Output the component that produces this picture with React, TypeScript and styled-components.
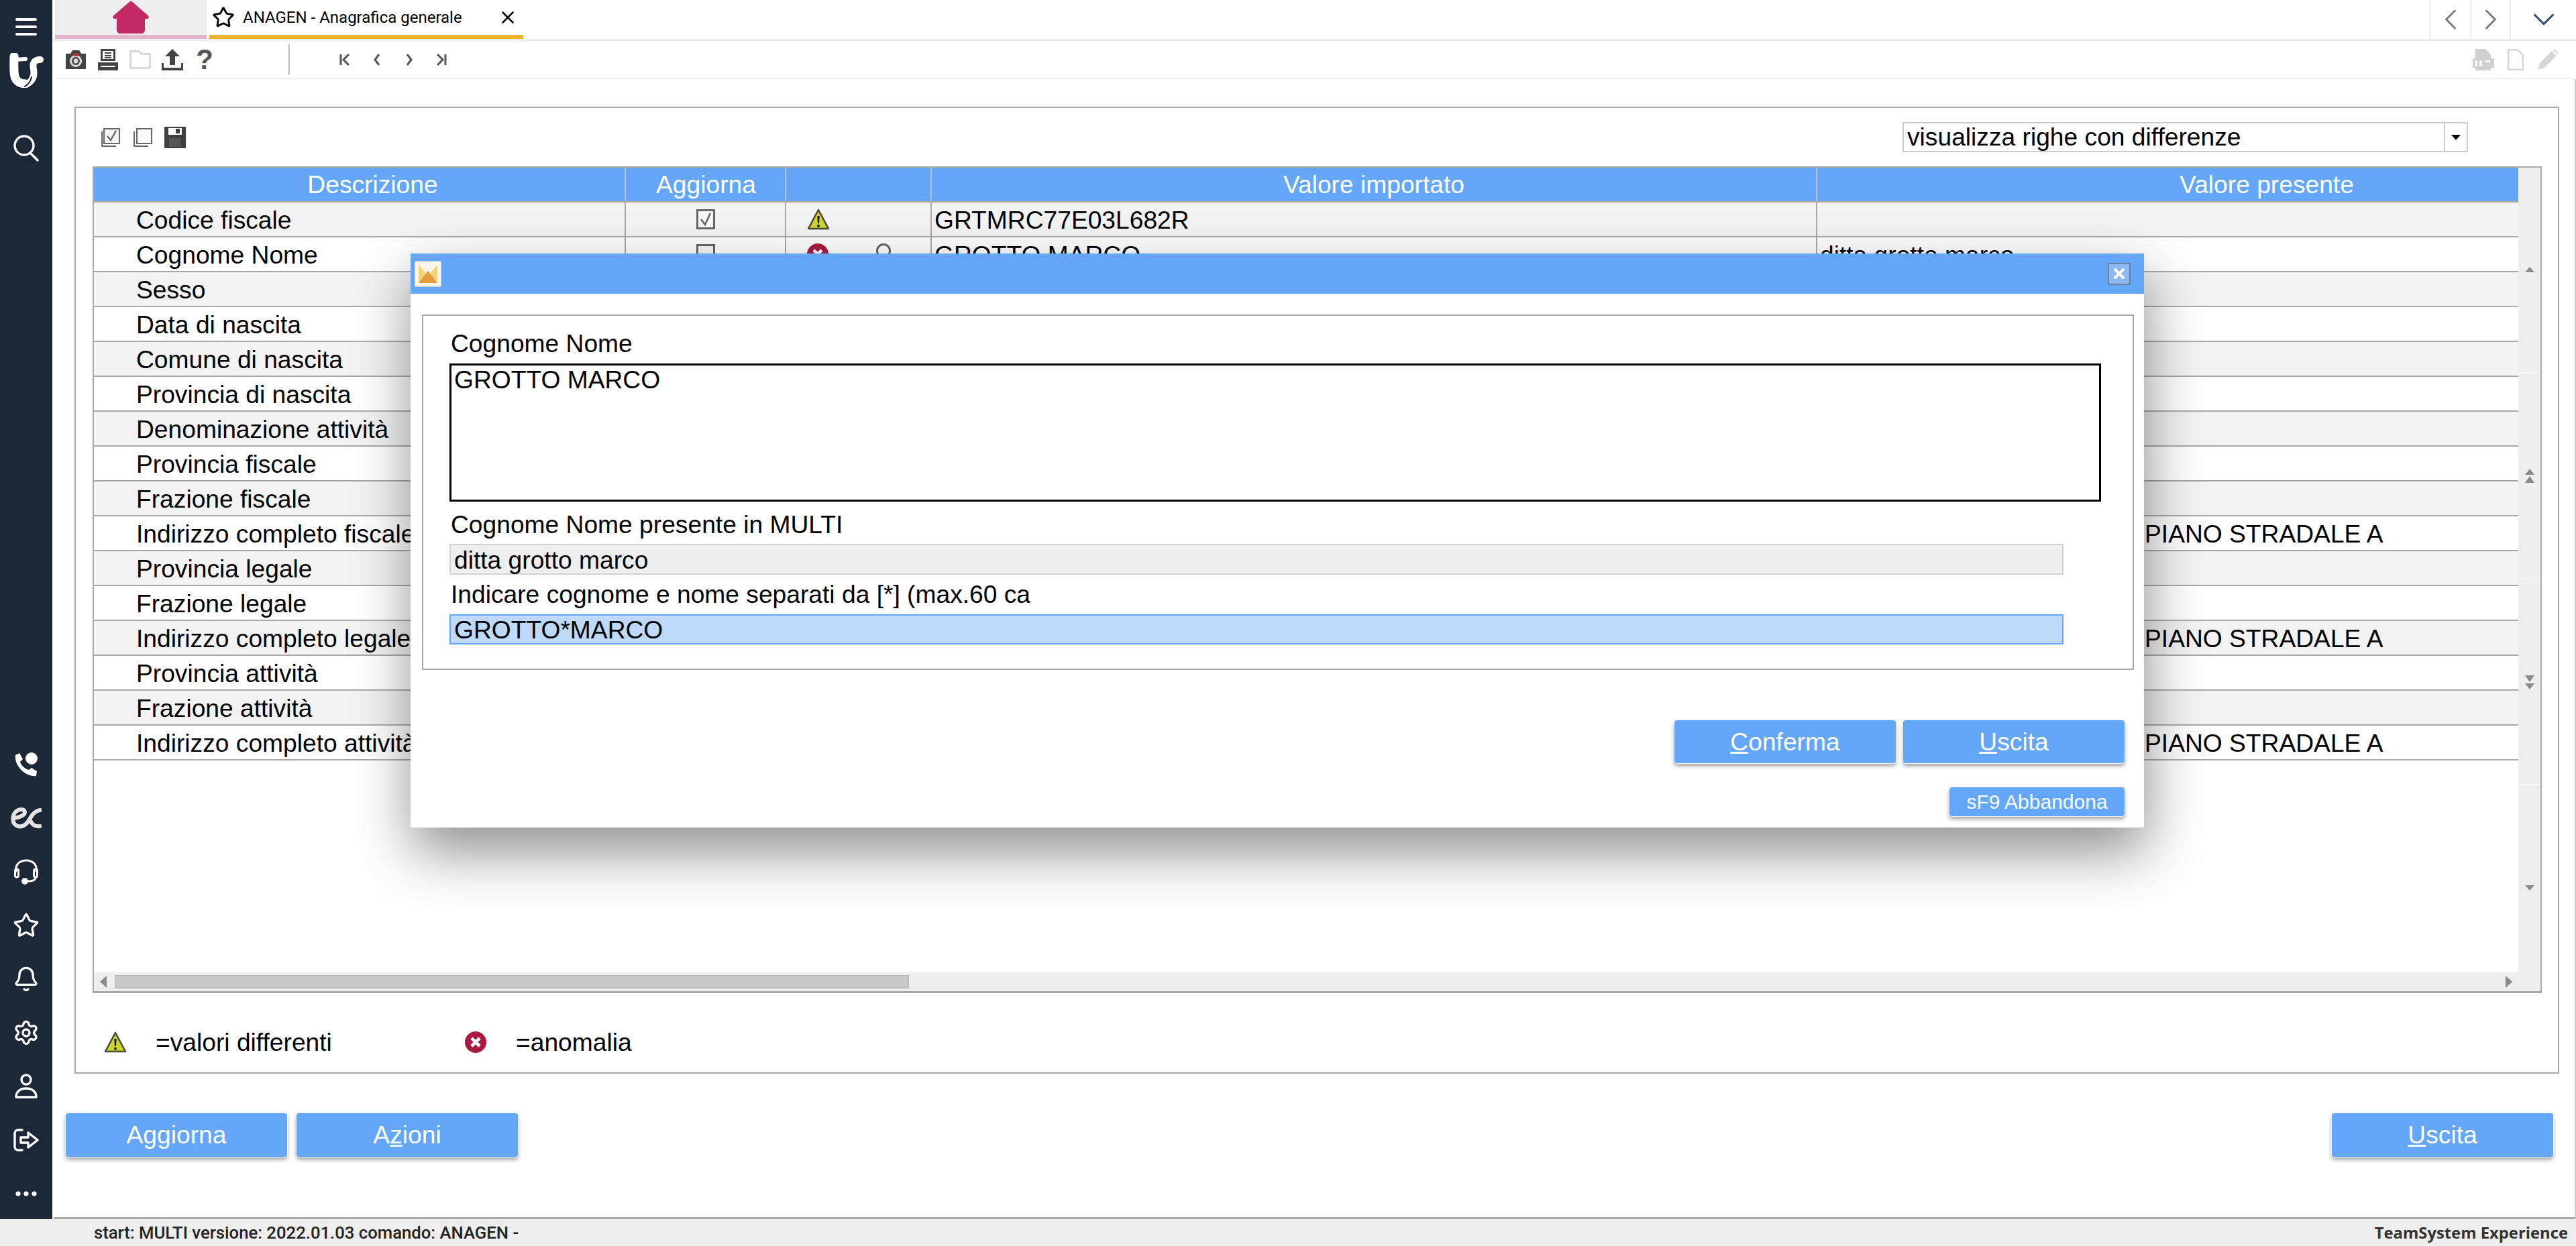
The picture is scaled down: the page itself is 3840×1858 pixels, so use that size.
import React from 'react';
import styled, { createGlobalStyle } from 'styled-components';
import { Bell, ChevronDown, ChevronLeft, ChevronRight, Settings, Star, X } from 'lucide-react';

const BLUE = '#64a6f8';
const LINE = '#a9a9a9';

const GlobalStyle = createGlobalStyle`
  html, body { margin: 0; padding: 0; background: #fff; overflow: hidden; }
  * { box-sizing: border-box; }
  body { font-family: "Liberation Sans", Arial, sans-serif; color: #000; }
`;

const Page = styled.div`
  position: relative;
  width: 3840px;
  height: 1858px;
  display: flex;
  flex-direction: column;
  overflow: hidden;
`;
const Main = styled.div`
  flex: 1;
  display: flex;
  min-height: 0;
`;

/* sidebar */
const Sidebar = styled.nav`
  width: 78px;
  background: #1c2836;
  display: flex;
  flex-direction: column;
  align-items: center;
`;
const SideSlot = styled.div<{ $h: number; $mt?: number }>`
  height: ${p => p.$h}px;
  margin-top: ${p => p.$mt || 0}px;
  display: flex;
  align-items: center;
  justify-content: center;
  color: #fff;
`;
const SideBottom = styled.div`
  margin-top: auto;
  margin-bottom: -2px;
  display: flex;
  flex-direction: column;
  align-items: center;
`;

/* right of the sidebar */
const Content = styled.div`
  flex: 1;
  min-width: 0;
  display: flex;
  flex-direction: column;
`;
const TabBar = styled.div`
  height: 61px;
  padding-left: 4px;
  border-bottom: 3px solid #eee;
  display: flex;
  gap: 4px;
`;
const HomeTab = styled.div`
  width: 226px;
  height: 58px;
  background: #eee;
  border-bottom: 6px solid #e3b4c7;
  display: flex;
  justify-content: center;
  padding-top: 2px;
`;
const AppTab = styled.div`
  width: 468px;
  height: 58px;
  border-bottom: 6px solid #efb02e;
  display: flex;
  align-items: center;
  padding-left: 4px;
  font-family: Roboto, sans-serif;
  font-size: 24px;
`;
const AppTabTitle = styled.span`
  margin-left: 12px;
  white-space: nowrap;
  width: 380px;
`;
const TabNav = styled.div`
  margin-left: auto;
  display: flex;
`;
const TabNavButton = styled.div<{ $w: number; $c: string }>`
  width: ${p => p.$w}px;
  height: 58px;
  border-left: 2px solid #eee;
  display: flex;
  align-items: center;
  justify-content: center;
  color: ${p => p.$c};
`;
const Toolbar = styled.div`
  height: 57px;
  margin: 0 4px 0 4px;
  padding: 0 14px 0 7px;
  border-bottom: 2px solid #eee;
  display: flex;
  align-items: center;
`;
const ToolSlot = styled.div`
  width: 48px;
  height: 40px;
  display: flex;
  align-items: center;
  justify-content: center;
  color: #444;
`;
const HelpMark = styled.span`
  font-size: 42px;
  font-weight: 700;
  color: #555;
  line-height: 1;
`;
const ToolDivider = styled.div`
  width: 2px;
  height: 46px;
  background: #bbb;
  margin: 0 58px 0 101px;
`;
const ToolRight = styled.div`
  margin-left: auto;
  display: flex;
`;

/* work area */
const Work = styled.div`
  flex: 1;
  display: flex;
  flex-direction: column;
  padding-top: 41px;
  border-right: 2px solid #ccc;
  border-bottom: 3px solid ${LINE};
  margin-left: 2px;
`;
const Panel = styled.section`
  height: 1442px;
  margin: 0 23px 0 31px;
  border: 2px solid ${LINE};
  padding: 20px 0 0 25px;
  display: flex;
  flex-direction: column;
`;
const PanelHead = styled.div`
  height: 47px;
  display: flex;
  align-items: center;
  padding-right: 134px;
`;
const HeadIcon = styled.div`
  width: 48px;
  height: 44px;
  display: flex;
  align-items: center;
  justify-content: center;
  &:first-child { margin-left: 3px; }
`;
const SelectBox = styled.div`
  margin-left: auto;
  width: 843px;
  height: 45px;
  border: 2px solid #ccc;
  display: flex;
  align-items: center;
  padding-left: 5px;
  font-size: 37.2px;
`;
const SelectArrow = styled.div`
  margin-left: auto;
  width: 34px;
  height: 100%;
  border-left: 2px solid #ccc;
  display: flex;
  align-items: center;
  justify-content: center;
  &::after {
    content: '';
    border-left: 7px solid transparent;
    border-right: 7px solid transparent;
    border-top: 8px solid #000;
  }
`;
const RefreshSlot = styled.div`
  position: relative;
  left: 44px;
  width: 0;
  display: flex;
  justify-content: center;
`;

const TableBox = styled.div`
  height: 1233px;
  margin-top: 20px;
  width: 3651px;
  border: 2px solid ${LINE};
  border-bottom-width: 3px;
  display: flex;
`;
const GridArea = styled.div`
  width: 3616px;
  overflow: hidden;
  display: flex;
  flex-direction: column;
`;
const COLS = '793px 239px 217px 1320px 1340px';
const HeadRow = styled.div`
  flex: none;
  display: grid;
  grid-template-columns: ${COLS};
  height: 52px;
  background: ${BLUE};
  border-bottom: 2px solid ${LINE};
  color: #fff;
  font-size: 37.2px;
`;
const HeadCell = styled.div<{ $pad?: number }>`
  display: flex;
  align-items: center;
  justify-content: center;
  padding-left: ${p => p.$pad || 0}px;
  border-right: 2px solid #b7c3d6;
  &:last-child { border-right: 0; }
`;
const Row = styled.div<{ $odd: boolean }>`
  flex: none;
  display: grid;
  grid-template-columns: ${COLS};
  height: 52px;
  background: ${p => (p.$odd ? '#f3f3f3' : '#fff')};
  border-bottom: 2px solid ${LINE};
  font-size: 37.2px;
`;
const Cell = styled.div<{ $pad?: number }>`
  display: flex;
  align-items: center;
  padding: 3px 0 0 ${p => p.$pad ?? 4}px;
  border-right: 2px solid ${LINE};
  white-space: nowrap;
  overflow: hidden;
  &:last-child { border-right: 0; }
`;
const CheckCell = styled(Cell)`
  justify-content: center;
  padding: 0;
`;
const StatusCell = styled(Cell)`
  padding: 0 0 0 31px;
`;
const KeySlot = styled.div`
  margin-left: 70px;
  display: flex;
`;
const GridFill = styled.div`
  flex: 1;
`;
const HScroll = styled.div`
  flex: none;
  height: 28px;
  background: #eee;
  display: flex;
  align-items: center;
  padding: 0 9px 0 9px;
`;
const HThumb = styled.div`
  width: 1184px;
  height: 20px;
  margin-left: 12px;
  background: #c9c9c9;
  border: 2px solid #bcbcbc;
`;
const ArrowLeft = styled.div`
  border-top: 9px solid transparent;
  border-bottom: 9px solid transparent;
  border-right: 10px solid #8a8a8a;
`;
const ArrowRight = styled.div`
  margin-left: auto;
  border-top: 9px solid transparent;
  border-bottom: 9px solid transparent;
  border-left: 10px solid #8a8a8a;
`;
const VScroll = styled.div`
  width: 33px;
  display: grid;
  grid-template-rows: repeat(4, 1fr);
  background: #eee;
  border-radius: 8px 0 0 0;
`;
const VSeg = styled.div`
  display: flex;
  align-items: center;
  justify-content: center;
  color: #8a8a8a;
  border-bottom: 2px solid #f7f7f7;
  &:last-child { border-bottom: 0; }
`;
const Legend = styled.div`
  margin-top: 53px;
  height: 40px;
  padding-left: 16px;
  display: flex;
  align-items: center;
  font-size: 37.2px;
`;
const LegendIcon = styled.div`
  width: 36px;
  display: flex;
  justify-content: center;
`;
const LegendText = styled.span<{ $w: number }>`
  width: ${p => p.$w}px;
  margin-left: 42px;
  white-space: nowrap;
`;

const ButtonBar = styled.div`
  margin-top: 59px;
  padding: 0 32px 0 18px;
  display: flex;
  gap: 14px;
`;
const Btn = styled.div<{ $push?: boolean }>`
  width: 330px;
  height: 65px;
  margin-left: ${p => (p.$push ? 'auto' : 0)};
  background: ${BLUE};
  color: #fff;
  font-size: 37.2px;
  border-radius: 4px;
  display: flex;
  align-items: center;
  justify-content: center;
  box-shadow: 0 0 0 1px #eef4fd, 0 4px 6px rgba(0, 0, 0, 0.4);
`;

/* footer */
const Footer = styled.footer`
  height: 40px;
  background: #eee;
  display: flex;
  align-items: center;
  padding: 0 12px 0 140px;
  font-family: Roboto, sans-serif;
  font-weight: 500;
  font-size: 25.7px;
  color: #222;
  white-space: nowrap;
`;
const Brand = styled.span`
  margin-left: auto;
  font-family: "Open Sans", sans-serif;
  font-weight: 700;
  font-size: 23.8px;
  color: #333;
`;

/* dialog over the page */
const Dialog = styled.div`
  position: absolute;
  left: 612px;
  top: 378px;
  width: 2584px;
  height: 856px;
  background: #fff;
  box-shadow: 3px 35px 80px rgba(0, 0, 0, 0.45);
  display: flex;
  flex-direction: column;
`;
const DialogTitle = styled.div`
  height: 60px;
  background: ${BLUE};
  display: flex;
  align-items: center;
  padding: 0 20px 0 6px;
  justify-content: space-between;
`;
const CloseBtn = styled.div`
  width: 34px;
  height: 33px;
  background: #8db9f3;
  border: 2px solid #6b7f9c;
  display: flex;
  align-items: center;
  justify-content: center;
  color: #fff;
`;
const DialogPanel = styled.div`
  margin: 31px 15px 0 17px;
  height: 530px;
  border: 2px solid ${LINE};
  padding: 20px 0 0 39px;
  font-size: 37.2px;
`;
const FieldLabel = styled.div<{ $mt?: number }>`
  height: 40px;
  line-height: 43px;
  margin-top: ${p => p.$mt || 0}px;
  padding-left: 2px;
  white-space: nowrap;
`;
const TextBox = styled.div`
  width: 2462px;
  height: 206px;
  margin-top: 11px;
  border: 3px solid #000;
  padding: 0 4px;
  line-height: 42px;
`;
const Field = styled.div<{ $bg: string; $border: string; $h: number; $mt: number }>`
  width: 2406px;
  height: ${p => p.$h}px;
  margin-top: ${p => p.$mt}px;
  background: ${p => p.$bg};
  border: 2px solid ${p => p.$border};
  padding: 2px 0 0 5px;
  display: flex;
  align-items: center;
`;
const DialogButtons = styled.div`
  margin-top: 75px;
  padding-right: 29px;
  display: flex;
  justify-content: flex-end;
  gap: 11px;
`;
const DialogBtn = styled(Btn)`
  height: 64px;
`;
const SmallRow = styled.div`
  margin-top: 36px;
  padding-right: 29px;
  display: flex;
  justify-content: flex-end;
`;
const SmallBtn = styled(Btn)`
  width: 261px;
  height: 43px;
  font-size: 30px;
`;

/* drawings */
const Hamburger = () => (
  <svg width="34" height="28" viewBox="0 0 34 28">
    <g stroke="#fff" strokeWidth="4" strokeLinecap="round">
      <path d="M3 3h28M3 14h28M3 25h28" />
    </g>
  </svg>
);
const TsLogo = () => (
  <svg width="52" height="52" viewBox="0 0 52 52" fill="none" stroke="#fff" strokeLinecap="round">
    <path d="M8 5 C8 15 7 26 9 35 C11 43 18 46 25 46" strokeWidth="13" />
    <path d="M8 10 L25 9" strokeWidth="6" />
    <path d="M47 10 C38 10 35 15 37 24 C39 34 36 42 26 47" strokeWidth="10" />
    <path d="M24 50 C30 46 33 42 34 36" stroke="#1c2836" strokeWidth="2" />
  </svg>
);
const SearchIcon = () => (
  <svg width="40" height="40" viewBox="0 0 40 40" fill="none" stroke="#fff" strokeWidth="3.4" strokeLinecap="round">
    <circle cx="17" cy="16" r="14" />
    <path d="M26 27l11 11" />
  </svg>
);
const PhoneIcon = () => (
  <svg width="36" height="38" viewBox="0 0 36 38" fill="#fff">
    <circle cx="26" cy="10" r="9" />
    <path d="M2 5 L8 2 L13 11 L9 15 C11 21 16 25 22 27 L26 24 L34 29 L33 36 C18 38 0 22 2 5Z" />
  </svg>
);
const EcLogo = () => (
  <svg width="46" height="32" viewBox="0 0 46 32" fill="none" stroke="#e4e4e4" strokeWidth="6" strokeLinecap="round">
    <path d="M5 16 C12 15 21 12 21 7 C21 2 13 2 8 6 C2 11 2 22 7 26 C13 31 21 28 26 21 C30 14 35 5 44 4" />
    <path d="M44 28 C38 29 33 27 30 21" />
  </svg>
);
const HeadsetIcon = () => (
  <svg width="38" height="38" viewBox="0 0 38 38" fill="none" stroke="#fff" strokeWidth="3" strokeLinecap="round">
    <path d="M4 18 C2 8 10 2 19 2 C28 2 36 8 34 18" />
    <rect x="2.5" y="15" width="5" height="12" rx="2.5" />
    <rect x="30.5" y="15" width="5" height="12" rx="2.5" />
    <path d="M33 27 C33 31 29 33 22 33" />
    <circle cx="17" cy="33" r="3.4" fill="#fff" />
  </svg>
);
const UserIcon = () => (
  <svg width="34" height="38" viewBox="0 0 34 38" fill="none" stroke="#fff" strokeWidth="3.4">
    <circle cx="17" cy="9" r="7" />
    <path d="M2 35 C2 26 9 22 17 22 C25 22 32 26 32 35 Z" strokeLinejoin="round" />
  </svg>
);
const LogoutIcon = () => (
  <svg width="38" height="34" viewBox="0 0 38 34" fill="none" stroke="#fff" strokeWidth="3.4" strokeLinejoin="round" strokeLinecap="round">
    <path d="M13 2H7C4 2 2 4 2 7V27C2 30 4 32 7 32H13" />
    <path d="M11 13H22V6L36 17L22 28V21H11Z" />
  </svg>
);
const DotsIcon = () => (
  <svg width="32" height="8" viewBox="0 0 32 8" fill="#fff">
    <circle cx="4" cy="4" r="3.6" />
    <circle cx="16" cy="4" r="3.6" />
    <circle cx="28" cy="4" r="3.6" />
  </svg>
);
const HomeIcon = () => (
  <svg width="54" height="48" viewBox="0 0 54 48" fill="#c22a66">
    <path d="M27 0 C28 0 29 .6 30 1.5 L52.5 21 C55 23.5 53.5 26 51 26 H48 V42 C48 46 46 48 42 48 H12 C8 48 6 46 6 42 V26 H3 C.5 26 -1 23.5 1.5 21 L24 1.5 C25 .6 26 0 27 0Z" />
  </svg>
);
const CameraIcon = () => (
  <svg width="32" height="30" viewBox="0 0 32 30">
    <path d="M1 6 H8 L11 1 H21 L24 6 H31 V29 H1Z" fill="#444" />
    <circle cx="16" cy="17" r="9" fill="#ddd" />
    <circle cx="16" cy="17" r="6" fill="#444" />
    <circle cx="16" cy="17" r="3.4" fill="#ddd" />
    <path d="M11 6h10l-2 4h-6z" fill="#c9302c" />
  </svg>
);
const PrinterIcon = () => (
  <svg width="32" height="32" viewBox="0 0 32 32" fill="#444">
    <path d="M5 0 H27 V18 H5Z M8 3 V15 H24 V3Z" fillRule="evenodd" />
    <path d="M11 5h10v2H11zM11 9h10v2H11zM11 12h10v2H11z" />
    <path d="M1 20 H31 V32 H1Z M5 25 V27 H27 V25Z" fillRule="evenodd" />
  </svg>
);
const FolderIcon = () => (
  <svg width="32" height="28" viewBox="0 0 32 28" fill="none" stroke="#d2d2d2" strokeWidth="2.5">
    <path d="M1.5 1.5 H14 L18 5.5 H30.5 V26.5 H1.5Z" />
  </svg>
);
const UploadIcon = () => (
  <svg width="32" height="32" viewBox="0 0 32 32" fill="#444">
    <path d="M16 0 L27 11 H20 V24 H12 V11 H5Z" />
    <path d="M0 21 H3 V28 H29 V21 H32 V32 H0Z" />
  </svg>
);
const NavIcon = ({ d }: { d: string }) => (
  <svg width="18" height="18" viewBox="0 0 18 18" fill="none" stroke="#555" strokeWidth="3">
    <path d={d} />
  </svg>
);
const PdfIcon = () => (
  <svg width="34" height="32" viewBox="0 0 34 32">
    <path d="M5 0 H20 L28 8 V14 H33 V28 H28 V32 H5 V28 H1 V14 H5Z" fill="#d0d0d0" />
    <path d="M4 17h4v9H4zM11 17h4v9h-4zM19 17h8v3h-8z" fill="#f6f6f6" />
  </svg>
);
const DocIcon = () => (
  <svg width="24" height="32" viewBox="0 0 24 32" fill="none" stroke="#d6d6d6" strokeWidth="2.4">
    <path d="M1.2 1.2 H15 L22.8 9 V30.8 H1.2Z" />
  </svg>
);
const PencilIcon = () => (
  <svg width="32" height="32" viewBox="0 0 32 32" fill="#d6d6d6">
    <path d="M1 31 L4 21 L22 3 L29 10 L11 28Z" />
    <path d="M24 1 L26 0 L32 6 L31 8Z" />
  </svg>
);
const CheckAllIcon = () => (
  <svg width="30" height="30" viewBox="0 0 30 30" fill="none" stroke="#666" strokeWidth="2">
    <path d="M5 2 H28 V24 H5Z" fill="#f4f4f4" />
    <path d="M2 6 V28 H23" />
    <path d="M10 13 L15 19 L23 5" strokeWidth="2.4" />
  </svg>
);
const CopyIcon = () => (
  <svg width="30" height="30" viewBox="0 0 30 30" fill="none" stroke="#666" strokeWidth="2">
    <path d="M6 2 H28 V24 H6Z" fill="#fafafa" />
    <path d="M2 6 V28 H23" />
  </svg>
);
const SaveIcon = () => (
  <svg width="32" height="32" viewBox="0 0 32 32" fill="#3f3f3f">
    <path d="M0 0 H32 V32 H0Z M6 2 V12 H26 V2Z" fillRule="evenodd" />
    <path d="M17 3h6v7h-6z" />
    <path d="M7 17h18v13H7z" fill="#555" />
  </svg>
);
const RefreshIcon = () => (
  <svg width="34" height="30" viewBox="0 0 34 30" fill="none" stroke="#444" strokeWidth="4.4">
    <path d="M28 19 A12.5 12.5 0 1 1 25 7" />
    <path d="M31 1 V13 H19Z" fill="#444" stroke="none" />
  </svg>
);
const CheckBox = ({ on }: { on: boolean }) => (
  <svg width="28" height="30" viewBox="0 0 28 30" fill="none">
    <rect x="1.5" y="1.5" width="25" height="27" fill="#f8f8f8" stroke="#666" strokeWidth="3" />
    {on && <path d="M7 15 L13 23 L21 6" stroke="#666" strokeWidth="2.6" />}
  </svg>
);
const WarnIcon = () => (
  <svg width="34" height="32" viewBox="0 0 34 32">
    <path d="M17 2 L32 30 H2Z" fill="#cdd62a" stroke="#4a4a3a" strokeWidth="2.6" strokeLinejoin="round" />
    <path d="M15.4 11h3.2l-.6 11h-2zM15.3 24h3.4v3.6h-3.4z" fill="#111" />
  </svg>
);
const ErrorIcon = () => (
  <svg width="32" height="32" viewBox="0 0 32 32">
    <circle cx="16" cy="16" r="16" fill="#ad1a41" />
    <path d="M10 10 L22 22 M22 10 L10 22" stroke="#fff" strokeWidth="4.6" />
  </svg>
);
const KeyIcon = () => (
  <svg width="24" height="32" viewBox="0 0 24 32" fill="none" stroke="#666" strokeWidth="3">
    <circle cx="12" cy="11" r="9.5" />
    <path d="M12 20 V31" />
  </svg>
);
const DialogIcon = () => (
  <svg width="40" height="39" viewBox="0 0 40 39">
    <rect x=".5" y=".5" width="39" height="38" rx="2" fill="#fbf6ea" stroke="#c9c9c9" />
    <path d="M6 6 L20 22 L34 6 V32 H6Z" fill="#f4d27a" />
    <path d="M6 33 L20 15 L34 33Z" fill="#e59c3f" />
  </svg>
);
const ScrollUp = ({ double }: { double?: boolean }) => (
  <svg width="20" height="24" viewBox="0 0 20 24" fill="currentColor">
    <path d={double ? 'M10 1 L17 10 H3Z M10 12 L17 22 H3Z' : 'M10 7 L17 15 H3Z'} />
  </svg>
);
const ScrollDown = ({ double }: { double?: boolean }) => (
  <svg width="20" height="24" viewBox="0 0 20 24" fill="currentColor">
    <path d={double ? 'M10 23 L17 14 H3Z M10 12 L17 2 H3Z' : 'M10 15 L17 7 H3Z'} />
  </svg>
);

type RowData = {
  label: string;
  status?: 'warn' | 'error';
  checked?: boolean;
  imported?: string;
  present?: string;
  indent?: number;
};

const rows: RowData[] = [
  { label: 'Codice fiscale', status: 'warn', checked: true, imported: 'GRTMRC77E03L682R' },
  { label: 'Cognome Nome', status: 'error', imported: 'GROTTO MARCO', present: 'ditta grotto marco' },
  { label: 'Sesso' },
  { label: 'Data di nascita' },
  { label: 'Comune di nascita' },
  { label: 'Provincia di nascita' },
  { label: 'Denominazione attività' },
  { label: 'Provincia fiscale' },
  { label: 'Frazione fiscale' },
  { label: 'Indirizzo completo fiscale', present: 'PIANO STRADALE A', indent: 488 },
  { label: 'Provincia legale' },
  { label: 'Frazione legale' },
  { label: 'Indirizzo completo legale', present: 'PIANO STRADALE A', indent: 488 },
  { label: 'Provincia attività' },
  { label: 'Frazione attività' },
  { label: 'Indirizzo completo attività', present: 'PIANO STRADALE A', indent: 488 },
];

export default function App() {
  return (
    <Page>
      <GlobalStyle />
      <Main>
        <Sidebar>
          <SideSlot $h={80}><Hamburger /></SideSlot>
          <SideSlot $h={50}><TsLogo /></SideSlot>
          <SideSlot $h={40} $mt={71}><SearchIcon /></SideSlot>
          <SideBottom>
            <SideSlot $h={80}><PhoneIcon /></SideSlot>
            <SideSlot $h={80}><EcLogo /></SideSlot>
            <SideSlot $h={80}><HeadsetIcon /></SideSlot>
            <SideSlot $h={80}><Star size={40} strokeWidth={2} /></SideSlot>
            <SideSlot $h={80}><Bell size={40} strokeWidth={2} /></SideSlot>
            <SideSlot $h={80}><Settings size={40} strokeWidth={2} /></SideSlot>
            <SideSlot $h={80}><UserIcon /></SideSlot>
            <SideSlot $h={80}><LogoutIcon /></SideSlot>
            <SideSlot $h={80}><DotsIcon /></SideSlot>
          </SideBottom>
        </Sidebar>

        <Content>
          <TabBar>
            <HomeTab><HomeIcon /></HomeTab>
            <AppTab>
              <Star size={34} strokeWidth={2} />
              <AppTabTitle>ANAGEN - Anagrafica generale</AppTabTitle>
              <X size={30} strokeWidth={2} />
            </AppTab>
            <TabNav>
              <TabNavButton $w={60} $c="#777"><ChevronLeft size={52} strokeWidth={1.3} /></TabNavButton>
              <TabNavButton $w={59} $c="#777"><ChevronRight size={52} strokeWidth={1.3} /></TabNavButton>
              <TabNavButton $w={99} $c="#2b4a6f"><ChevronDown size={54} strokeWidth={1.3} /></TabNavButton>
            </TabNav>
          </TabBar>

          <Toolbar>
            <ToolSlot><CameraIcon /></ToolSlot>
            <ToolSlot><PrinterIcon /></ToolSlot>
            <ToolSlot><FolderIcon /></ToolSlot>
            <ToolSlot><UploadIcon /></ToolSlot>
            <ToolSlot><HelpMark>?</HelpMark></ToolSlot>
            <ToolDivider />
            <ToolSlot><NavIcon d="M3 1v16M15 1L7 9l8 8" /></ToolSlot>
            <ToolSlot><NavIcon d="M12 1L6 9l6 8" /></ToolSlot>
            <ToolSlot><NavIcon d="M6 1l6 8-6 8" /></ToolSlot>
            <ToolSlot><NavIcon d="M15 1v16M3 1l8 8-8 8" /></ToolSlot>
            <ToolRight>
              <ToolSlot><PdfIcon /></ToolSlot>
              <ToolSlot><DocIcon /></ToolSlot>
              <ToolSlot><PencilIcon /></ToolSlot>
            </ToolRight>
          </Toolbar>

          <Work>
            <Panel>
              <PanelHead>
                <HeadIcon><CheckAllIcon /></HeadIcon>
                <HeadIcon><CopyIcon /></HeadIcon>
                <HeadIcon><SaveIcon /></HeadIcon>
                <SelectBox>
                  visualizza righe con differenze
                  <SelectArrow />
                </SelectBox>
                <RefreshSlot><RefreshIcon /></RefreshSlot>
              </PanelHead>

              <TableBox>
                <GridArea>
                  <HeadRow>
                    <HeadCell $pad={40}>Descrizione</HeadCell>
                    <HeadCell $pad={2}>Aggiorna</HeadCell>
                    <HeadCell />
                    <HeadCell>Valore importato</HeadCell>
                    <HeadCell>Valore presente</HeadCell>
                  </HeadRow>
                  {rows.map((r, i) => (
                    <Row key={r.label} $odd={i % 2 === 0}>
                      <Cell $pad={63}>{r.label}</Cell>
                      <CheckCell>
                        {r.status && <CheckBox on={!!r.checked} />}
                      </CheckCell>
                      <StatusCell>
                        {r.status === 'warn' && <WarnIcon />}
                        {r.status === 'error' && <ErrorIcon />}
                        {r.status === 'error' && <KeySlot><KeyIcon /></KeySlot>}
                      </StatusCell>
                      <Cell>{r.imported}</Cell>
                      <Cell $pad={r.indent}>{r.present}</Cell>
                    </Row>
                  ))}
                  <GridFill />
                  <HScroll>
                    <ArrowLeft />
                    <HThumb />
                    <ArrowRight />
                  </HScroll>
                </GridArea>
                <VScroll>
                  <VSeg><ScrollUp /></VSeg>
                  <VSeg><ScrollUp double /></VSeg>
                  <VSeg><ScrollDown double /></VSeg>
                  <VSeg><ScrollDown /></VSeg>
                </VScroll>
              </TableBox>

              <Legend>
                <LegendIcon><WarnIcon /></LegendIcon>
                <LegendText $w={459}>=valori differenti</LegendText>
                <LegendIcon><ErrorIcon /></LegendIcon>
                <LegendText $w={300}>=anomalia</LegendText>
              </Legend>
            </Panel>

            <ButtonBar>
              <Btn>Aggiorna</Btn>
              <Btn>A<u>z</u>ioni</Btn>
              <Btn $push><u>U</u>scita</Btn>
            </ButtonBar>
          </Work>
        </Content>
      </Main>

      <Footer>
        start: MULTI versione: 2022.01.03 comando: ANAGEN -
        <Brand>TeamSystem Experience</Brand>
      </Footer>

      <Dialog>
        <DialogTitle>
          <DialogIcon />
          <CloseBtn><X size={24} strokeWidth={4} /></CloseBtn>
        </DialogTitle>
        <DialogPanel>
          <FieldLabel>Cognome Nome</FieldLabel>
          <TextBox>GROTTO MARCO</TextBox>
          <FieldLabel $mt={13}>Cognome Nome presente in MULTI</FieldLabel>
          <Field $bg="#eee" $border="#d2d2d2" $h={46} $mt={10}>ditta grotto marco</Field>
          <FieldLabel $mt={8}>Indicare cognome e nome separati da [*] (max.60 ca</FieldLabel>
          <Field $bg="#bfd9fb" $border="#64a6f8" $h={45} $mt={11}>GROTTO*MARCO</Field>
        </DialogPanel>
        <DialogButtons>
          <DialogBtn><u>C</u>onferma</DialogBtn>
          <DialogBtn><u>U</u>scita</DialogBtn>
        </DialogButtons>
        <SmallRow>
          <SmallBtn>sF9 Abbandona</SmallBtn>
        </SmallRow>
      </Dialog>
    </Page>
  );
}
